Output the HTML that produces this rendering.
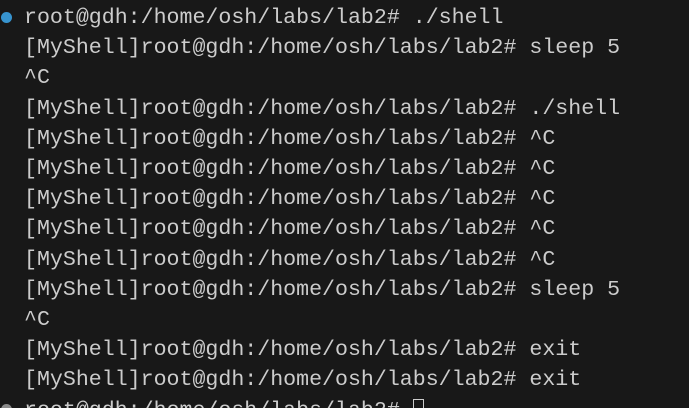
<!DOCTYPE html>
<html><head><meta charset="utf-8"><style>
html,body{margin:0;padding:0;background:#181818;width:689px;height:408px;overflow:hidden}
#w{position:relative;width:689px;height:408px;overflow:hidden;background:#181818}
.t{position:absolute;left:24px;top:3px;font-family:"Liberation Mono","DejaVu Sans Mono",monospace;font-size:21.6px;line-height:30.2px;color:#cccccc;white-space:pre}
.dot{position:absolute;left:1px;width:11px;height:11px;border-radius:50%}
.cur{display:inline-block;width:11px;height:20px;border:1px solid #cccccc;box-sizing:border-box;vertical-align:-3px}
</style></head><body><div id="w">
<div class="dot" style="top:12px;background:#3794cf"></div>
<div class="dot" style="top:404px;background:#8a8a8a"></div>
<div class="t">root@gdh:/home/osh/labs/lab2# ./shell
[MyShell]root@gdh:/home/osh/labs/lab2# sleep 5
^C
[MyShell]root@gdh:/home/osh/labs/lab2# ./shell
[MyShell]root@gdh:/home/osh/labs/lab2# ^C
[MyShell]root@gdh:/home/osh/labs/lab2# ^C
[MyShell]root@gdh:/home/osh/labs/lab2# ^C
[MyShell]root@gdh:/home/osh/labs/lab2# ^C
[MyShell]root@gdh:/home/osh/labs/lab2# ^C
[MyShell]root@gdh:/home/osh/labs/lab2# sleep 5
^C
[MyShell]root@gdh:/home/osh/labs/lab2# exit
[MyShell]root@gdh:/home/osh/labs/lab2# exit
root@gdh:/home/osh/labs/lab2# <span class="cur"></span></div>
</div></body></html>
